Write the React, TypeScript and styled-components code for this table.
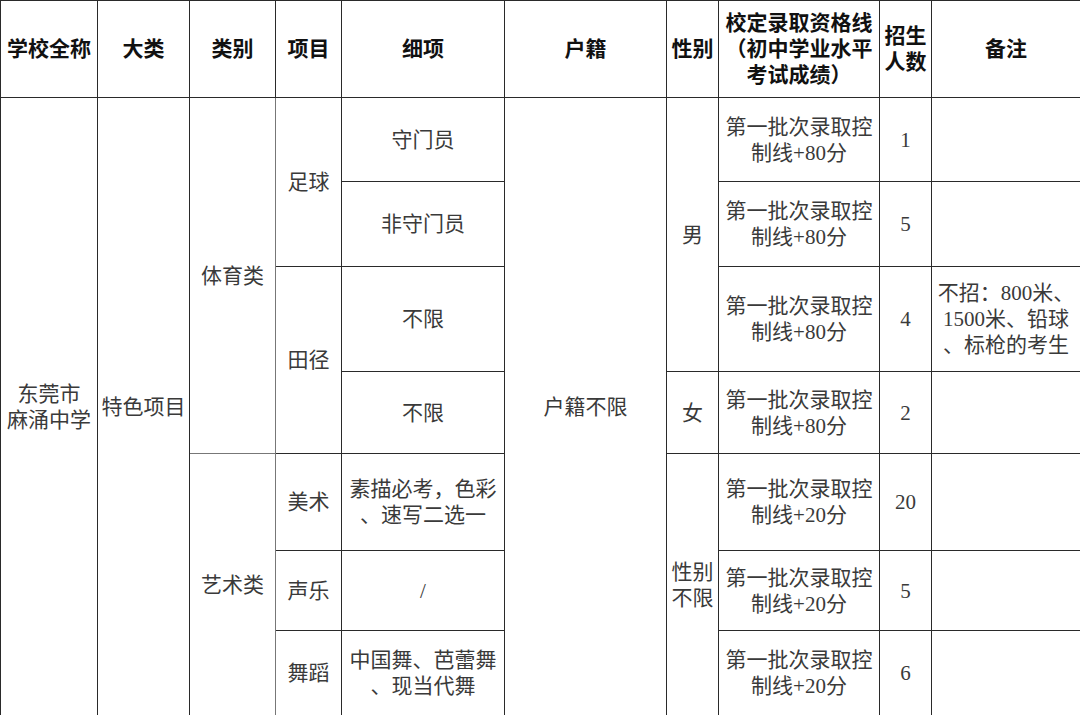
import React from "react";
import styled, { createGlobalStyle } from "styled-components";

const GlobalStyle = createGlobalStyle`
  html, body {
    margin: 0;
    padding: 0;
    background: #ffffff;
  }
`;

const Table = styled.table`
  width: 1080px;
  border-collapse: collapse;
  table-layout: fixed;
  font-family: "Liberation Serif", "Noto Sans CJK SC", serif;
  font-size: 21px;
  line-height: 26px;
  color: #3a3a3a;
`;

const HeadCell = styled.th`
  border: 1px solid #2a2a2a;
  padding: 0 1px;
  font-weight: 700;
  color: #111111;
  text-align: center;
  vertical-align: middle;
`;

const Cell = styled.td<{ $light?: boolean }>`
  border: 1px solid ${(p) => (p.$light ? "#777777" : "#2a2a2a")};
  padding: 0 1px;
  font-weight: 400;
  text-align: center;
  vertical-align: middle;
`;

const Row = styled.tr<{ $h: number }>`
  height: ${(p) => p.$h}px;
`;

const widths = [97, 92, 86, 66, 163, 162, 52, 161, 52, 149];

const Score = ({ pts }: { pts: number }) => (
  <Cell>
    第一批次录取控
    <br />
    制线+{pts}分
  </Cell>
);

const App = () => {
  return (
    <>
      <GlobalStyle />
      <Table>
        <colgroup>
          {widths.map((w, i) => (
            <col key={i} style={{ width: w }} />
          ))}
        </colgroup>
        <thead>
          <Row $h={97}>
            <HeadCell>学校全称</HeadCell>
            <HeadCell>大类</HeadCell>
            <HeadCell>类别</HeadCell>
            <HeadCell>项目</HeadCell>
            <HeadCell>细项</HeadCell>
            <HeadCell>户籍</HeadCell>
            <HeadCell>性别</HeadCell>
            <HeadCell>
              校定录取资格线
              <br />
              （初中学业水平
              <br />
              考试成绩）
            </HeadCell>
            <HeadCell>
              招生
              <br />
              人数
            </HeadCell>
            <HeadCell>备注</HeadCell>
          </Row>
        </thead>
        <tbody>
          <Row $h={84}>
            <Cell rowSpan={7}>
              东莞市
              <br />
              麻涌中学
            </Cell>
            <Cell rowSpan={7}>特色项目</Cell>
            <Cell rowSpan={4} $light>体育类</Cell>
            <Cell rowSpan={2}>足球</Cell>
            <Cell>守门员</Cell>
            <Cell rowSpan={7}>户籍不限</Cell>
            <Cell rowSpan={3}>男</Cell>
            <Score pts={80} />
            <Cell>1</Cell>
            <Cell />
          </Row>
          <Row $h={85}>
            <Cell>非守门员</Cell>
            <Score pts={80} />
            <Cell>5</Cell>
            <Cell />
          </Row>
          <Row $h={105}>
            <Cell rowSpan={2}>田径</Cell>
            <Cell>不限</Cell>
            <Score pts={80} />
            <Cell>4</Cell>
            <Cell>
              不招：800米、
              <br />
              1500米、铅球
              <br />
              、标枪的考生
            </Cell>
          </Row>
          <Row $h={82}>
            <Cell>不限</Cell>
            <Cell>女</Cell>
            <Score pts={80} />
            <Cell>2</Cell>
            <Cell />
          </Row>
          <Row $h={97}>
            <Cell rowSpan={3} $light>艺术类</Cell>
            <Cell>美术</Cell>
            <Cell>
              素描必考，色彩
              <br />
              、速写二选一
            </Cell>
            <Cell rowSpan={3}>
              性别
              <br />
              不限
            </Cell>
            <Score pts={20} />
            <Cell>20</Cell>
            <Cell />
          </Row>
          <Row $h={80}>
            <Cell>声乐</Cell>
            <Cell>/</Cell>
            <Score pts={20} />
            <Cell>5</Cell>
            <Cell />
          </Row>
          <Row $h={85}>
            <Cell>舞蹈</Cell>
            <Cell>
              中国舞、芭蕾舞
              <br />
              、现当代舞
            </Cell>
            <Score pts={20} />
            <Cell>6</Cell>
            <Cell />
          </Row>
        </tbody>
      </Table>
    </>
  );
};

export default App;
